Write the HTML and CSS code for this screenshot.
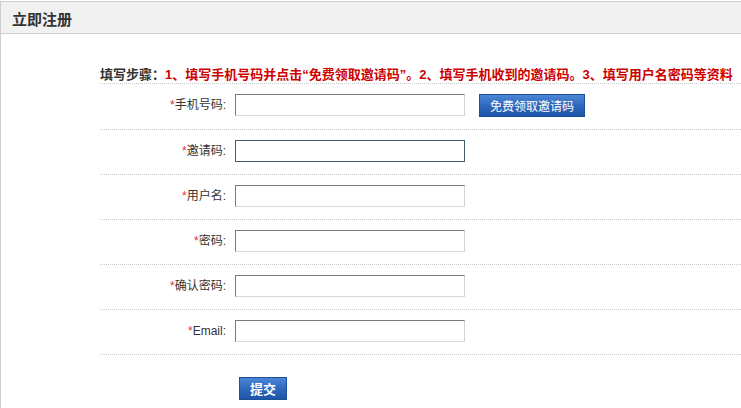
FILE: index.html
```html
<!DOCTYPE html>
<html lang="zh-CN">
<head>
<meta charset="utf-8">
<title>立即注册</title>
<link rel="stylesheet" href="styles.css">
</head>
<body>
<div class="page">
  <div class="hd"><h2 class="hd-title">立即注册</h2></div>
  <div class="bd">
    <div class="steps"><span class="steps-label">填写步骤：</span><span class="steps-text">1、填写手机号码并点击“免费领取邀请码”。2、填写手机收到的邀请码。3、填写用户名密码等资料</span></div>
    <div class="row">
      <label class="lbl"><em class="req">*</em>手机号码:</label>
      <input class="ipt" type="text">
      <button class="btn btn-code" type="button">免费领取邀请码</button>
    </div>
    <div class="row">
      <label class="lbl"><em class="req">*</em>邀请码:</label>
      <input class="ipt ipt-focus" type="text">
    </div>
    <div class="row">
      <label class="lbl"><em class="req">*</em>用户名:</label>
      <input class="ipt" type="text">
    </div>
    <div class="row">
      <label class="lbl"><em class="req">*</em>密码:</label>
      <input class="ipt" type="password">
    </div>
    <div class="row">
      <label class="lbl"><em class="req">*</em>确认密码:</label>
      <input class="ipt" type="password">
    </div>
    <div class="row">
      <label class="lbl"><em class="req">*</em>Email:</label>
      <input class="ipt" type="text">
    </div>
    <div class="submit-row">
      <button class="btn btn-submit" type="submit">提交</button>
    </div>
  </div>
</div>
</body>
</html>
```
FILE: styles.css
```css
html, body {
  margin: 0;
  padding: 0;
  background: #fff;
}
body {
  font-family: "Liberation Sans", "Noto Sans CJK SC", sans-serif;
  font-size: 12px;
  color: #333;
}
.page {
  margin-top: 1px;
  border-top: 1px solid #cfcfcf;
  border-left: 1px solid #cfcfcf;
  height: 406px;
  overflow: hidden;
}
.hd {
  background: #f1f1f1;
  border-bottom: 1px solid #cfcfcf;
  height: 27px;
  padding: 4px 0 0 11px;
}
.hd-title {
  margin: 0;
  font-size: 15px;
  line-height: 27px;
  font-weight: bold;
  color: #333;
}
.bd {
  padding-left: 99px;
}
.steps {
  padding-top: 33px;
  line-height: 16px;
  font-size: 13px;
  font-weight: bold;
  white-space: nowrap;
  border-bottom: 1px dotted #c8c8c8;
}
.steps-label {
  color: #333;
}
.steps-text {
  color: #cc0000;
}
.row {
  display: flex;
  align-items: flex-start;
  padding: 10px 0 12px;
  border-bottom: 1px dotted #c8c8c8;
}
.lbl {
  width: 126px;
  text-align: right;
  line-height: 22px;
  color: #333;
}
.req {
  font-style: normal;
  color: #e0312f;
}
.ipt {
  box-sizing: border-box;
  width: 230px;
  height: 22px;
  margin: 0 0 0 9px;
  padding: 0 3px;
  border: 1px solid;
  border-color: #7a7a7a #d3d3d3 #d8d8d8 #7a7a7a;
  background: #fff;
  outline: none;
}
.ipt-focus {
  border-color: #3e5f6f;
}
.btn {
  box-sizing: border-box;
  height: 23px;
  padding: 0;
  border: 1px solid #1b4f96;
  background: linear-gradient(#4a86d6, #2d66bb 55%, #1e55a8);
  color: #fff;
  font-family: "Liberation Sans", "Noto Sans CJK SC", sans-serif;
  cursor: pointer;
}
.btn-code {
  width: 106px;
  margin-left: 14px;
  font-size: 12px;
}
.submit-row {
  padding: 22px 0 0 139px;
}
.btn-submit {
  width: 48px;
  font-size: 13px;
  font-weight: bold;
}
```
